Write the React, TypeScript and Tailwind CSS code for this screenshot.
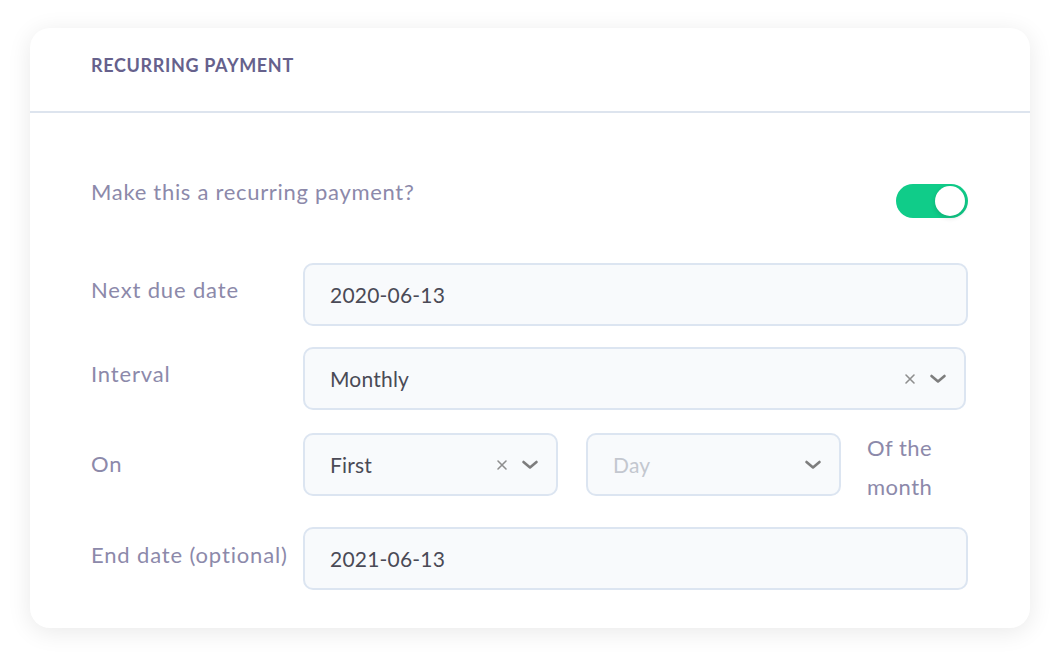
import React from "react";

const Chevron = () => (
  <svg width="20" height="20" viewBox="0 0 20 20" className="text-[#7d7d7d]">
    <path d="M3.5 7 L10 12.5 L16.5 7" fill="none" stroke="currentColor" strokeWidth="2.6" strokeLinecap="round" strokeLinejoin="round" />
  </svg>
);

const Clear = () => (
  <svg width="12" height="12" viewBox="0 0 12 12" className="text-[#8e8e8e]">
    <path d="M2 2 L10 10 M10 2 L2 10" fill="none" stroke="currentColor" strokeWidth="1.6" strokeLinecap="round" />
  </svg>
);

const Field = ({ children, className = "" }: { children: React.ReactNode; className?: string }) => (
  <div
    className={
      "h-[63px] rounded-[10px] border-2 border-[#dce5f1] bg-[#f8fafc] flex items-center pl-[25px] pr-[16px] text-[21px] text-[#4a4a56] tracking-[0.2px] " +
      className
    }
  >
    {children}
  </div>
);

const labelCls = "w-[212px] text-[22px] text-[#8c89aa] leading-[32px] tracking-[0.85px] whitespace-nowrap";

export default function App() {
  return (
    <div
      className="w-[1060px] h-[660px] bg-white pt-[28px] pl-[30px]"
      style={{ fontFamily: "Lato, 'Noto Sans', sans-serif" }}
    >
      <div className="w-[1000px] h-[600px] rounded-[20px] bg-white shadow-[0_4px_24px_rgba(0,0,0,0.09)]">
        <div className="h-[85px] border-b-2 border-[#dde4ee] pl-[61px] pt-[24px]">
          <div className="text-[18px] font-bold text-[#66618c] tracking-[0.65px]">RECURRING PAYMENT</div>
        </div>
        <div className="pl-[61px] pr-[62px] pt-[64px]">
          <div className="flex justify-between items-start h-[86px]">
            <div className="text-[22px] text-[#8c89aa] leading-[32px] tracking-[0.7px] mt-[-1px]">Make this a recurring payment?</div>
            <div className="w-[72px] h-[34px] rounded-full bg-[#10cc89] flex items-center justify-end pr-[3px] mt-[7px]">
              <div className="w-[30px] h-[30px] rounded-full bg-white shadow-[0_2px_5px_rgba(0,0,0,0.15)]" />
            </div>
          </div>
          <div className="flex flex-col gap-[21px]">
            <div className="flex items-start">
              <div className={labelCls + " pt-[11px]"}>Next due date</div>
              <Field className="flex-1">2020-06-13</Field>
            </div>
            <div className="flex items-start">
              <div className={labelCls + " pt-[11px]"}>Interval</div>
              <Field className="flex-1 mr-[2px]">
                <span className="flex-1">Monthly</span>
                <span className="flex items-center gap-[12px]">
                  <Clear />
                  <Chevron />
                </span>
              </Field>
            </div>
            <div className="flex items-start">
              <div className={labelCls + " pt-[17px]"}>On</div>
              <div className="flex items-start gap-[28px] pt-[2px]">
                <Field className="w-[255px]">
                  <span className="flex-1">First</span>
                  <span className="flex items-center gap-[12px]">
                    <Clear />
                    <Chevron />
                  </span>
                </Field>
                <Field className="w-[255px]">
                  <span className="flex-1 text-[#c3c7cf]">Day</span>
                  <Chevron />
                </Field>
              </div>
              <div className="ml-[26px] text-[22px] text-[#8c89aa] leading-[39px] tracking-[0.5px] mt-[-3px]">
                Of the
                <br />
                month
              </div>
            </div>
            <div className="flex items-start">
              <div className={labelCls + " pt-[12px]"}>End date (optional)</div>
              <Field className="flex-1">2021-06-13</Field>
            </div>
          </div>
        </div>
      </div>
    </div>
  );
}
